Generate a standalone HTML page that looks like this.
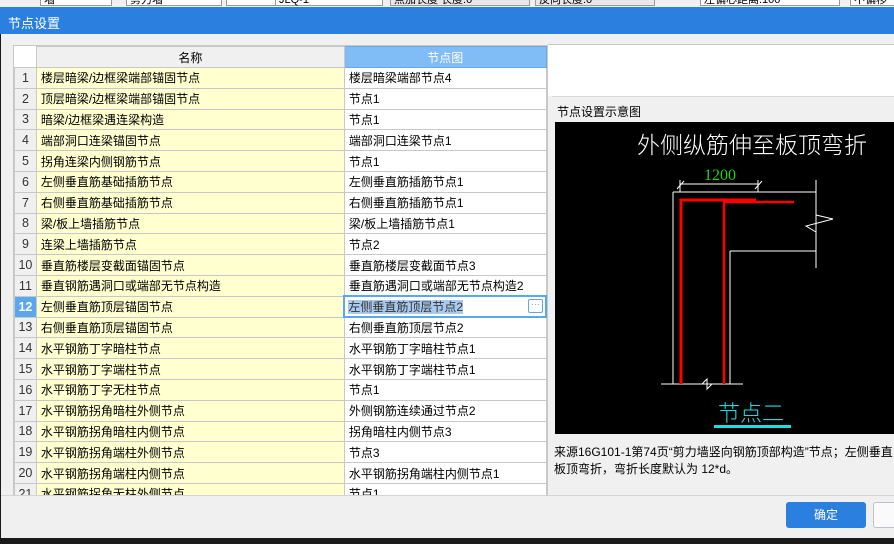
<!DOCTYPE html>
<html><head><meta charset="utf-8"><style>
*{margin:0;padding:0;box-sizing:border-box}
body{width:894px;height:544px;overflow:hidden;background:#1a1a1a;font-family:"Liberation Sans","Noto Sans CJK SC",sans-serif;font-size:12px;color:#000;position:relative}
.abs{position:absolute}
#top{left:0;top:0;width:894px;height:7px;background:#f0f0f0;overflow:hidden}
#top div{position:absolute;top:-6px;height:12px;border:1px solid #999;background:#fff;font-size:11px;line-height:10px;padding-left:3px}
#title{left:0;top:7px;width:894px;height:27px;background:#2b7fde;color:#fff;font-size:13px;padding:6px 0 0 8px}
#dlg{left:1px;top:34px;width:893px;height:504px;background:#f0f0f0}
#tbl{left:13px;top:45px;width:535px;height:451px;border:1px solid #c8c8c8;background:#fff;overflow:hidden}
table{border-collapse:collapse;table-layout:fixed}
td{height:20.8px;border:1px solid #c8c8c8;white-space:nowrap;overflow:hidden;padding:0 4px;font-size:12px}
td.n{background:#f0f0f0;text-align:center;padding:0;color:#333;font-size:12.5px}
td.a{background:#ffffd0}
th{height:21px;background:#f0f0f0;font-weight:normal;border:1px solid #c8c8c8;font-size:12px}
</style></head><body>
<div id="top" class="abs">
<div style="left:40px;width:72px">墙</div>
<div style="left:126px;width:96px">剪力墙</div>
<div style="left:226px;width:92px">&nbsp;</div>
<div style="left:275px;width:108px">JLQ-1</div>
<div style="left:390px;width:140px;background:#e8e8e8">点加长度 长度:0</div>
<div style="left:535px;width:120px;background:#e8e8e8">反向长度:0</div>
<div style="left:700px;width:140px">左偏心距离:100</div>
<div style="left:850px;width:60px">不偏移</div>
</div>
<div id="title" class="abs">节点设置</div>
<div id="dlg" class="abs"></div>
<div id="tbl" class="abs">
<table>
<colgroup><col style="width:22px"><col style="width:311px"><col style="width:202px"></colgroup>
<tr><th style="background:#fff;border-top:none;border-left:none"></th><th>名称</th><th style="background:#80bcf6;color:#fff;border-color:#6aa8e8">节点图</th></tr>
<tr><td class="n">1</td><td class="a">楼层暗梁/边框梁端部锚固节点</td><td>楼层暗梁端部节点4</td></tr>
<tr><td class="n">2</td><td class="a">顶层暗梁/边框梁端部锚固节点</td><td>节点1</td></tr>
<tr><td class="n">3</td><td class="a">暗梁/边框梁遇连梁构造</td><td>节点1</td></tr>
<tr><td class="n">4</td><td class="a">端部洞口连梁锚固节点</td><td>端部洞口连梁节点1</td></tr>
<tr><td class="n">5</td><td class="a">拐角连梁内侧钢筋节点</td><td>节点1</td></tr>
<tr><td class="n">6</td><td class="a">左侧垂直筋基础插筋节点</td><td>左侧垂直筋插筋节点1</td></tr>
<tr><td class="n">7</td><td class="a">右侧垂直筋基础插筋节点</td><td>右侧垂直筋插筋节点1</td></tr>
<tr><td class="n">8</td><td class="a">梁/板上墙插筋节点</td><td>梁/板上墙插筋节点1</td></tr>
<tr><td class="n">9</td><td class="a">连梁上墙插筋节点</td><td>节点2</td></tr>
<tr><td class="n">10</td><td class="a">垂直筋楼层变截面锚固节点</td><td>垂直筋楼层变截面节点3</td></tr>
<tr><td class="n">11</td><td class="a">垂直钢筋遇洞口或端部无节点构造</td><td>垂直筋遇洞口或端部无节点构造2</td></tr>
<tr><td class="n" style="background:#5aa6ef;color:#fff;font-weight:bold">12</td><td class="a">左侧垂直筋顶层锚固节点</td><td style="border:2px solid #5aa6ef;position:relative;padding:0 3px"><span style="background:#a9c9ee;color:#333">左侧垂直筋顶层节点2</span><span style="position:absolute;right:2px;top:2px;width:15px;height:14px;border:1px solid #5aa6ef;border-radius:2px;font-size:9px;line-height:9px;text-align:center;color:#5aa6ef">···</span></td></tr>
<tr><td class="n">13</td><td class="a">右侧垂直筋顶层锚固节点</td><td>右侧垂直筋顶层节点2</td></tr>
<tr><td class="n">14</td><td class="a">水平钢筋丁字暗柱节点</td><td>水平钢筋丁字暗柱节点1</td></tr>
<tr><td class="n">15</td><td class="a">水平钢筋丁字端柱节点</td><td>水平钢筋丁字端柱节点1</td></tr>
<tr><td class="n">16</td><td class="a">水平钢筋丁字无柱节点</td><td>节点1</td></tr>
<tr><td class="n">17</td><td class="a">水平钢筋拐角暗柱外侧节点</td><td>外侧钢筋连续通过节点2</td></tr>
<tr><td class="n">18</td><td class="a">水平钢筋拐角暗柱内侧节点</td><td>拐角暗柱内侧节点3</td></tr>
<tr><td class="n">19</td><td class="a">水平钢筋拐角端柱外侧节点</td><td>节点3</td></tr>
<tr><td class="n">20</td><td class="a">水平钢筋拐角端柱内侧节点</td><td>水平钢筋拐角端柱内侧节点1</td></tr>
<tr><td class="n">21</td><td class="a">水平钢筋拐角无柱外侧节点</td><td>节点1</td></tr>
</table></div>
<div class="abs" style="left:548px;top:44px;width:346px;height:52px;background:#fff;border-top:1px solid #c8c8c8"></div>
<div class="abs" style="left:552px;top:96px;width:342px;height:2px;border-top:1px solid #d8d8d8"></div>
<div class="abs" style="left:557px;top:103px;font-size:12px">节点设置示意图</div>
<svg class="abs" style="left:555px;top:122px" width="339" height="312" viewBox="555 122 339 312">
<rect x="555" y="122" width="339" height="312" fill="#000"/>
<text x="752" y="153" fill="#fff" font-size="23" text-anchor="middle" font-family="Noto Sans CJK SC,sans-serif" font-weight="300">外侧纵筋伸至板顶弯折</text>
<text x="720" y="180" fill="#1ed21e" font-size="16" text-anchor="middle" font-family="Liberation Serif,serif">1200</text>
<g stroke="#fff" stroke-width="1" fill="none">
<path d="M680 184H758M680 180V192M758 180V192M677 189L684 181M755 189L762 181"/>
<path d="M673 192V384M673 192H816M816 180V268M816 215L833 219L806 226L816 232M730 251H816M730 251V384M661 384H743M702 384L707 379L707 389L712 384"/>
</g>
<g stroke="#f00" fill="none">
<path d="M681 384V200H756" stroke-width="3"/>
<path d="M724 384V202H794" stroke-width="2.5"/>
</g>
<text x="751" y="421" fill="#16e0e6" font-size="22" text-anchor="middle" font-family="Noto Sans CJK SC,sans-serif" font-weight="300">节点二</text>
<rect x="714" y="425" width="77" height="3" fill="#16e0e6"/>
</svg>
<div class="abs" style="left:554px;top:444px;width:340px;font-size:12px;line-height:17px;white-space:nowrap">来源16G101-1第74页“剪力墙竖向钢筋顶部构造”节点；左侧垂直<br>板顶弯折，弯折长度默认为 12*d。</div>
<div class="abs" style="left:1px;top:495px;width:893px;height:1px;background:#d4d4d4"></div>
<div class="abs" style="left:786px;top:502px;width:80px;height:26px;background:#2b7fde;color:#fff;border-radius:3px;text-align:center;line-height:26px;font-size:12px">确定</div>
<div class="abs" style="left:873px;top:502px;width:30px;height:26px;background:#fafafa;border:1px solid #c0c0c8;border-radius:3px"></div>
</body></html>
